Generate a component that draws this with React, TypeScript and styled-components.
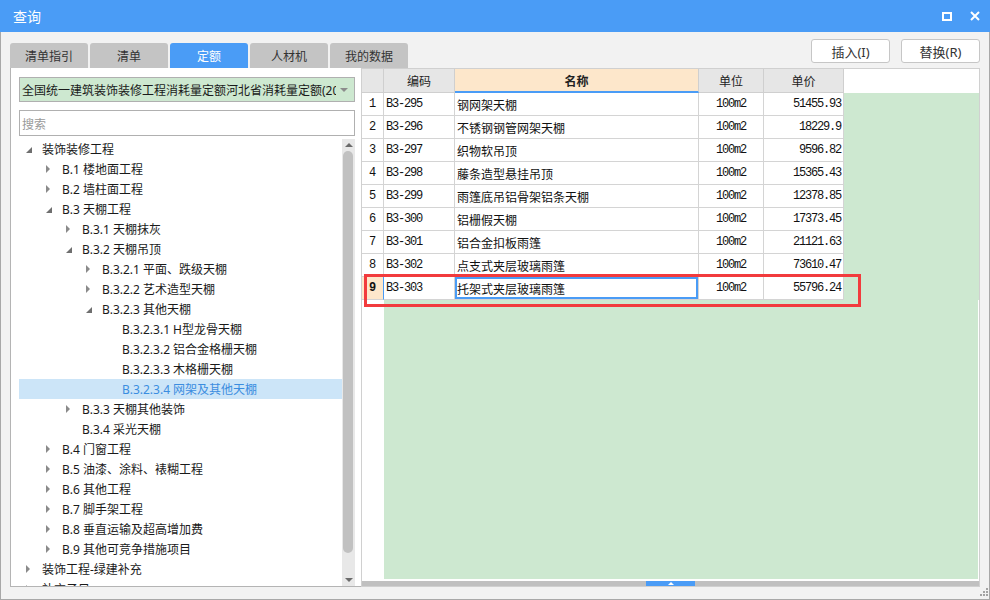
import React from 'react';
import styled, { createGlobalStyle } from 'styled-components';

// --- CONSTANTS ---

const BLUE = '#4a9cf6';
const GREEN = '#cde8d0';
const GRID_LINE = '#d4d4d4';
const UI_FONT = '"Noto Sans", "Noto Sans CJK SC", sans-serif';
const CJK_FONT = '"Noto Sans CJK SC", sans-serif';
const MONO_FONT = '"Liberation Mono", "Noto Sans CJK SC", monospace';

// --- STYLED COMPONENTS ---

const GlobalStyle = createGlobalStyle`
  html, body {
    margin: 0;
    padding: 0;
    background: #fff;
  }
  body {
    font-family: ${UI_FONT};
  }
  * {
    box-sizing: border-box;
  }
`;

const Window = styled.div`
  width: 990px;
  height: 600px;
  display: flex;
  flex-direction: column;
  overflow: hidden;
`;

const TitleBar = styled.div`
  height: 32px;
  flex: none;
  background: ${BLUE};
  display: flex;
  align-items: center;
  justify-content: space-between;
  padding: 0 10px 0 13px;
`;

const Title = styled.span`
  font-family: ${CJK_FONT};
  font-size: 14px;
  color: #fff;
  line-height: 1;
`;

const WinControls = styled.div`
  display: flex;
  align-items: center;
  gap: 18px;
`;

const Body = styled.div`
  flex: 1;
  display: flex;
  flex-direction: column;
  background: #f2f2f2;
  border: 1px solid #a8a8a8;
  border-top: none;
  padding: 0 9px;
`;

const TopRow = styled.div`
  height: 36px;
  flex: none;
  display: flex;
  justify-content: space-between;
`;

const TabBar = styled.div`
  display: flex;
  gap: 2px;
  align-self: flex-end;
`;

const Tab = styled.div<{ $active?: boolean }>`
  width: 78px;
  height: 25px;
  border-radius: 3px 3px 0 0;
  background: ${p => (p.$active ? BLUE : '#c4c4c4')};
  color: ${p => (p.$active ? '#fff' : '#333')};
  font-family: ${CJK_FONT};
  font-size: 12px;
  display: flex;
  align-items: center;
  justify-content: center;
`;

const ButtonGroup = styled.div`
  display: flex;
  gap: 11px;
  margin-top: 7px;
`;

const Button = styled.div`
  width: 79px;
  height: 24px;
  background: #fff;
  border: 1px solid #c6c6c6;
  border-radius: 3px;
  font-family: ${UI_FONT};
  font-size: 13px;
  color: #333;
  display: flex;
  align-items: center;
  justify-content: center;
`;

const Main = styled.div`
  height: 519px;
  flex: none;
  display: flex;
`;

const LeftPanel = styled.div`
  width: 351px;
  flex: none;
  background: #fff;
  border: 1px solid #b4b4b4;
  border-top: none;
  border-right: none;
  display: flex;
  flex-direction: column;
  padding: 9px 6px 0 8px;
`;

const Combo = styled.div`
  height: 25px;
  flex: none;
  background: ${GREEN};
  border: 1px solid #b0b0b0;
  display: flex;
  align-items: center;
`;

const ComboText = styled.div`
  flex: 1;
  overflow: hidden;
  white-space: nowrap;
  padding-left: 2px;
  font-family: ${UI_FONT};
  font-size: 12px;
  color: #1a1a1a;
`;

const ComboArrow = styled.div`
  width: 18px;
  flex: none;
  display: flex;
  justify-content: center;
  padding-right: 2px;
`;

const Search = styled.div`
  height: 26px;
  flex: none;
  margin-top: 8px;
  background: #fff;
  border: 1px solid #b0b0b0;
  padding-left: 2px;
  display: flex;
  align-items: center;
  font-family: ${CJK_FONT};
  font-size: 12px;
  color: #9a9a9a;
`;

const TreeArea = styled.div`
  flex: 1;
  margin-top: 3px;
  display: flex;
  min-height: 0;
  overflow: hidden;
`;

const TreeList = styled.div`
  flex: 1;
  overflow: hidden;
`;

const TreeRow = styled.div<{ $level: number; $selected?: boolean }>`
  height: 20px;
  display: flex;
  align-items: center;
  padding-left: ${p => 7 + p.$level * 20}px;
  background: ${p => (p.$selected ? '#cce5f8' : 'transparent')};
  color: ${p => (p.$selected ? '#3b8de0' : '#1a1a1a')};
  font-family: ${UI_FONT};
  font-size: 12px;
  white-space: nowrap;
`;

const Toggle = styled.span`
  width: 16px;
  flex: none;
  display: flex;
  align-items: center;
`;

const VScroll = styled.div`
  width: 13px;
  flex: none;
  background: #e8e8e8;
  display: flex;
  flex-direction: column;
`;

const ScrollButton = styled.div`
  height: 12px;
  flex: none;
  display: flex;
  align-items: center;
  justify-content: center;
`;

const ScrollThumb = styled.div<{ $size: number }>`
  height: ${p => p.$size}px;
  width: 10px;
  margin-left: 1px;
  flex: none;
  background: #c1c1c1;
  border-radius: 5px;
`;

const ScrollSpacer = styled.div`
  flex: 1;
`;

const RightPanel = styled.div`
  flex: 1;
  position: relative;
  background: #fff;
  border: 1px solid #d0d0d0;
  display: flex;
  flex-direction: column;
`;

const HeaderRow = styled.div`
  height: 24px;
  flex: none;
  display: flex;
  background: #fff;
`;

const HeaderCell = styled.div<{ $w: number; $accent?: boolean }>`
  width: ${p => p.$w}px;
  flex: none;
  display: flex;
  align-items: center;
  justify-content: center;
  background: ${p => (p.$accent ? '#fde7cb' : '#e6e6e6')};
  border-right: 1px solid #cfcfcf;
  border-bottom: ${p => (p.$accent ? `2px solid ${BLUE}` : '1px solid #cfcfcf')};
  font-family: ${CJK_FONT};
  font-size: 12px;
  font-weight: ${p => (p.$accent ? 700 : 400)};
  color: #222;
`;

const DataRow = styled.div`
  height: 23px;
  flex: none;
  display: flex;
  background: ${GREEN};
`;

const Cell = styled.div<{ $w: number; $align?: 'left' | 'center' | 'right'; $mono?: boolean }>`
  width: ${p => p.$w}px;
  flex: none;
  display: flex;
  align-items: center;
  justify-content: ${p =>
    p.$align === 'right' ? 'flex-end' : p.$align === 'center' ? 'center' : 'flex-start'};
  padding: 0 2px;
  background: #fff;
  border-right: 1px solid ${GRID_LINE};
  border-bottom: 1px solid ${GRID_LINE};
  font-family: ${p => (p.$mono ? MONO_FONT : CJK_FONT)};
  font-size: 12px;
  letter-spacing: ${p => (p.$mono ? '-1.2px' : '0')};
  color: #111;
  white-space: nowrap;
  overflow: hidden;
`;

const RowNumCell = styled(Cell)<{ $current?: boolean }>`
  background: ${p => (p.$current ? '#fde7cb' : '#fff')};
  border-right-color: ${p => (p.$current ? BLUE : GRID_LINE)};
  font-weight: ${p => (p.$current ? 700 : 400)};
  letter-spacing: 0;
`;

const NameCell = styled(Cell)<{ $current?: boolean }>`
  box-shadow: ${p => (p.$current ? `inset 0 0 0 2px ${BLUE}` : 'none')};
`;

const Filler = styled.div`
  flex: 1;
  background: linear-gradient(to right, #fff 22px, ${GREEN} 22px);
  margin-right: 1px;
`;

const HScroll = styled.div`
  height: 5px;
  flex: none;
  margin-top: 2px;
  background: #c0c0c0;
  display: flex;
`;

const HScrollHandle = styled.div`
  width: 49px;
  margin-left: 284px;
  background: ${BLUE};
  display: flex;
  justify-content: center;
  align-items: flex-start;
`;

const Highlight = styled.div`
  position: absolute;
  left: 2px;
  top: 205px;
  width: 497px;
  height: 33px;
  border: 3px solid #f23b3d;
  pointer-events: none;
`;

const Footer = styled.div`
  height: 12px;
  flex: none;
  display: flex;
  justify-content: flex-end;
  align-items: flex-start;
`;

const Grip = styled.svg`
  margin-right: -8px;
`;

// --- DATA ---

type NodeState = 'open' | 'closed' | 'leaf';

interface TreeNode {
  level: number;
  state: NodeState;
  label: string;
  selected?: boolean;
}

const treeNodes: TreeNode[] = [
  { level: 0, state: 'open', label: '装饰装修工程' },
  { level: 1, state: 'closed', label: 'B.1 楼地面工程' },
  { level: 1, state: 'closed', label: 'B.2 墙柱面工程' },
  { level: 1, state: 'open', label: 'B.3 天棚工程' },
  { level: 2, state: 'closed', label: 'B.3.1 天棚抹灰' },
  { level: 2, state: 'open', label: 'B.3.2 天棚吊顶' },
  { level: 3, state: 'closed', label: 'B.3.2.1 平面、跌级天棚' },
  { level: 3, state: 'closed', label: 'B.3.2.2 艺术造型天棚' },
  { level: 3, state: 'open', label: 'B.3.2.3 其他天棚' },
  { level: 4, state: 'leaf', label: 'B.3.2.3.1 H型龙骨天棚' },
  { level: 4, state: 'leaf', label: 'B.3.2.3.2 铝合金格栅天棚' },
  { level: 4, state: 'leaf', label: 'B.3.2.3.3 木格栅天棚' },
  { level: 4, state: 'leaf', label: 'B.3.2.3.4 网架及其他天棚', selected: true },
  { level: 2, state: 'closed', label: 'B.3.3 天棚其他装饰' },
  { level: 2, state: 'leaf', label: 'B.3.4 采光天棚' },
  { level: 1, state: 'closed', label: 'B.4 门窗工程' },
  { level: 1, state: 'closed', label: 'B.5 油漆、涂料、裱糊工程' },
  { level: 1, state: 'closed', label: 'B.6 其他工程' },
  { level: 1, state: 'closed', label: 'B.7 脚手架工程' },
  { level: 1, state: 'closed', label: 'B.8 垂直运输及超高增加费' },
  { level: 1, state: 'closed', label: 'B.9 其他可竞争措施项目' },
  { level: 0, state: 'closed', label: '装饰工程-绿建补充' },
  { level: 0, state: 'closed', label: '补充子目' },
];

const quotaRows = [
  ['B3-295', '钢网架天棚', '100m2', '51455.93'],
  ['B3-296', '不锈钢钢管网架天棚', '100m2', '18229.9'],
  ['B3-297', '织物软吊顶', '100m2', '9596.82'],
  ['B3-298', '藤条造型悬挂吊顶', '100m2', '15365.43'],
  ['B3-299', '雨篷底吊铝骨架铝条天棚', '100m2', '12378.85'],
  ['B3-300', '铝栅假天棚', '100m2', '17373.45'],
  ['B3-301', '铝合金扣板雨篷', '100m2', '21121.63'],
  ['B3-302', '点支式夹层玻璃雨篷', '100m2', '73610.47'],
  ['B3-303', '托架式夹层玻璃雨篷', '100m2', '55796.24'],
];

const CURRENT_ROW = 8;
const COLS = { num: 22, code: 71, name: 244, unit: 65, price: 80 };
const tabs = ['清单指引', '清单', '定额', '人材机', '我的数据'];

// --- ICONS ---

const ToggleIcon: React.FC<{ state: NodeState }> = ({ state }) => {
  if (state === 'open') {
    return (
      <svg width="6" height="6" viewBox="0 0 6 6" style={{ marginTop: 2 }}>
        <polygon points="6,0 6,6 0,6" fill="#6f6f6f" />
      </svg>
    );
  }
  if (state === 'closed') {
    return (
      <svg width="5" height="8" viewBox="0 0 5 8">
        <polygon points="0,0 4,4 0,8" fill="#8a8a8a" />
      </svg>
    );
  }
  return null;
};

const Caret: React.FC<{ up?: boolean; color?: string }> = ({ up, color = '#6b6b6b' }) => (
  <svg width="8" height="4" viewBox="0 0 8 4">
    <polygon points={up ? '0,4 4,0 8,4' : '0,0 8,0 4,4'} fill={color} />
  </svg>
);

// --- COMPONENT ---

const App: React.FC = () => {
  return (
    <>
      <GlobalStyle />
      <Window>
        <TitleBar>
          <Title>查询</Title>
          <WinControls>
            <svg width="10" height="9" viewBox="0 0 10 9">
              <rect x="1" y="1" width="8" height="7" fill="none" stroke="#fff" strokeWidth="2" />
            </svg>
            <svg width="10" height="10" viewBox="0 0 10 10">
              <path d="M1 1 L9 9 M9 1 L1 9" stroke="#fff" strokeWidth="2" />
            </svg>
          </WinControls>
        </TitleBar>

        <Body>
          <TopRow>
            <TabBar>
              {tabs.map(t => (
                <Tab key={t} $active={t === '定额'}>
                  {t}
                </Tab>
              ))}
            </TabBar>
            <ButtonGroup>
              <Button>插入(I)</Button>
              <Button>替换(R)</Button>
            </ButtonGroup>
          </TopRow>

          <Main>
            <LeftPanel>
              <Combo>
                <ComboText>全国统一建筑装饰装修工程消耗量定额河北省消耗量定额(2012)</ComboText>
                <ComboArrow>
                  <Caret color="#8c8c8c" />
                </ComboArrow>
              </Combo>
              <Search>搜索</Search>
              <TreeArea>
                <TreeList>
                  {treeNodes.map(n => (
                    <TreeRow key={n.label} $level={n.level} $selected={n.selected}>
                      <Toggle>
                        <ToggleIcon state={n.state} />
                      </Toggle>
                      {n.label}
                    </TreeRow>
                  ))}
                </TreeList>
                <VScroll>
                  <ScrollButton>
                    <Caret up />
                  </ScrollButton>
                  <ScrollThumb $size={402} />
                  <ScrollSpacer />
                  <ScrollButton>
                    <Caret />
                  </ScrollButton>
                </VScroll>
              </TreeArea>
            </LeftPanel>

            <RightPanel>
              <HeaderRow>
                <HeaderCell $w={COLS.num} />
                <HeaderCell $w={COLS.code}>编码</HeaderCell>
                <HeaderCell $w={COLS.name} $accent>
                  名称
                </HeaderCell>
                <HeaderCell $w={COLS.unit}>单位</HeaderCell>
                <HeaderCell $w={COLS.price}>单价</HeaderCell>
              </HeaderRow>
              {quotaRows.map(([code, name, unit, price], i) => {
                const current = i === CURRENT_ROW;
                return (
                  <DataRow key={code}>
                    <RowNumCell $w={COLS.num} $align="center" $mono $current={current}>
                      {i + 1}
                    </RowNumCell>
                    <Cell $w={COLS.code} $mono>
                      {code}
                    </Cell>
                    <NameCell $w={COLS.name} $current={current}>
                      {name}
                    </NameCell>
                    <Cell $w={COLS.unit} $align="center" $mono>
                      {unit}
                    </Cell>
                    <Cell $w={COLS.price} $align="right" $mono>
                      {price}
                    </Cell>
                  </DataRow>
                );
              })}
              <Filler />
              <HScroll>
                <HScrollHandle>
                  <svg width="6" height="3" viewBox="0 0 6 3" style={{ marginTop: 1 }}>
                    <polygon points="0,3 3,0 6,3" fill="#fff" />
                  </svg>
                </HScrollHandle>
              </HScroll>
              <Highlight />
            </RightPanel>
          </Main>

          <Footer>
            <Grip width="9" height="9" viewBox="0 0 9 9">
              {[
                [7, 1],
                [4, 4],
                [7, 4],
                [1, 7],
                [4, 7],
                [7, 7],
              ].map(([x, y]) => (
                <rect key={`${x}-${y}`} x={x} y={y} width="2" height="2" fill="#a3a3a3" />
              ))}
            </Grip>
          </Footer>
        </Body>
      </Window>
    </>
  );
};

export default App;
